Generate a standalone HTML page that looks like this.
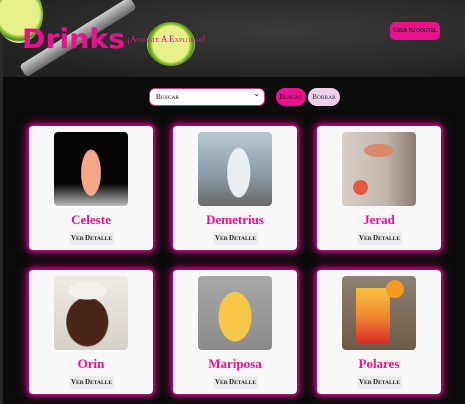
<!DOCTYPE html>
<html><head><style>
*{margin:0;padding:0;box-sizing:border-box}
body{width:465px;height:404px;background:#0b0b0b;overflow:hidden;position:relative;font-family:"Liberation Serif",serif}
.lb{position:absolute;left:0;top:0;width:3px;height:404px;background:#2a2a2a}
.hdr{position:absolute;left:3px;top:0;width:462px;height:77px;background:radial-gradient(ellipse at 60% 40%,#3b3b3b,#222 80%)}
.lime{position:absolute;border-radius:50%;background:radial-gradient(circle,#e6f08a 0 55%,#9fca3a 60%,#4f8a1a 70%,#dfe9b0 74%)}
.logo{position:absolute;left:22px;top:24px;font:900 27px "DejaVu Sans",sans-serif;color:#e8128f;letter-spacing:0px;transform:scaleX(1.05);transform-origin:left}
.tag{position:absolute;left:127px;top:34px;font-size:9px;color:#e8128f;font-variant:small-caps;white-space:nowrap}
.crea{position:absolute;left:390px;top:22px;width:50px;height:18px;background:#e8128f;border-radius:5px;font:bold 5px "Liberation Sans",sans-serif;color:#222;text-align:center;line-height:18px}
.sel{position:absolute;left:149px;top:88px;width:116px;height:18px;background:#fff;border:1px solid #c2387c;border-radius:6px;font-size:7px;padding-left:6px;line-height:16px;color:#111}
.sel:after{content:"⌄";position:absolute;right:4px;top:-3px;font-size:8px}
.b1{position:absolute;left:276px;top:88px;width:30px;height:18px;border-radius:9px;background:#e8128f;font-size:7px;text-align:center;line-height:18px;color:#111}
.b2{position:absolute;left:308px;top:88px;width:32px;height:18px;border-radius:9px;background:#edd0ea;font-size:7px;text-align:center;line-height:18px;color:#333}
.sc{font-size:5.5px;text-transform:uppercase}
.sc b{font-size:7px;font-weight:inherit}
.card{position:absolute;width:124px;height:124px;background:#f8f8f8;border-radius:4px;box-shadow:0 0 4px 2px #c0107a,0 0 10px 3px #6a0845}
.img{position:absolute;left:25px;top:6px;width:74px;height:74px;border-radius:4px;overflow:hidden}
.nm{position:absolute;left:0;width:100%;top:86px;text-align:center;color:#e8128f;font-size:13px;font-weight:bold}
.vd{position:absolute;left:40px;top:106px;width:45px;height:13px;background:#ececec;border-radius:3px;font-weight:bold;text-align:center;line-height:13px;color:#222}
</style></head><body>
<div class="lb"></div>
<div class="hdr">
<div class="lime" style="left:-8px;top:-15px;width:48px;height:58px"></div>
<div style="position:absolute;left:10px;top:30px;width:130px;height:14px;background:linear-gradient(#ccc,#666);transform:rotate(-32deg);border-radius:4px"></div>
<div class="lime" style="left:144px;top:22px;width:48px;height:44px"></div>
</div>
<div class="logo">Drinks</div>
<div class="tag">¡Animate A Explorar!</div>
<div class="crea">CREA TU COCTEL</div>
<div class="sel"><span class="sc"><b>B</b>USCAR</span></div>
<div class="b1"><span class="sc"><b>B</b>USCAR</span></div>
<div class="b2"><span class="sc"><b>B</b>ORRAR</span></div>

<div class="card" style="left:29px;top:126px"><div class="img" style="background:radial-gradient(ellipse 12px 28px at 50% 55%,#f4a888 80%,transparent 85%),linear-gradient(#050505 70%,#bbb)"></div><div class="nm">Celeste</div><div class="vd sc"><b>V</b>ER <b>D</b>ETALLE</div></div>
<div class="card" style="left:173px;top:126px"><div class="img" style="background:radial-gradient(ellipse 14px 30px at 55% 55%,#e8eef2 80%,transparent 85%),linear-gradient(#b8c8d0,#8a9aa4 60%,#6a6a6a)"></div><div class="nm">Demetrius</div><div class="vd sc"><b>V</b>ER <b>D</b>ETALLE</div></div>
<div class="card" style="left:317px;top:126px"><div class="img" style="background:radial-gradient(ellipse 18px 8px at 50% 25%,#d98a6a 80%,transparent 85%),radial-gradient(circle 9px at 25% 75%,#e05a40 80%,transparent 85%),linear-gradient(90deg,#d8cfc8,#bfb5ad 60%,#8a7a6c)"></div><div class="nm">Jerad</div><div class="vd sc"><b>V</b>ER <b>D</b>ETALLE</div></div>

<div class="card" style="left:29px;top:270px"><div class="img" style="background:radial-gradient(ellipse 22px 10px at 45% 20%,#f4f0ea 85%,transparent 90%),radial-gradient(ellipse 24px 28px at 45% 62%,#4a2418 85%,transparent 90%),linear-gradient(#eeeae6,#d6d0ca)"></div><div class="nm">Orin</div><div class="vd sc"><b>V</b>ER <b>D</b>ETALLE</div></div>
<div class="card" style="left:173px;top:270px"><div class="img" style="background:radial-gradient(ellipse 20px 30px at 50% 55%,#f5c84a 80%,transparent 85%),linear-gradient(#a8a8a8,#8a8a8a)"></div><div class="nm">Mariposa</div><div class="vd sc"><b>V</b>ER <b>D</b>ETALLE</div></div>
<div class="card" style="left:317px;top:270px"><div class="img" style="background:linear-gradient(#8c8274,#6e5a48)"><div style="position:absolute;left:14px;top:12px;width:34px;height:56px;background:linear-gradient(#f4c040,#f08a30 50%,#d82828);border-radius:0 0 4px 4px"></div><div style="position:absolute;left:44px;top:4px;width:18px;height:18px;border-radius:50%;background:#f39a20"></div></div><div class="nm">Polares</div><div class="vd sc"><b>V</b>ER <b>D</b>ETALLE</div></div>
</body></html>
